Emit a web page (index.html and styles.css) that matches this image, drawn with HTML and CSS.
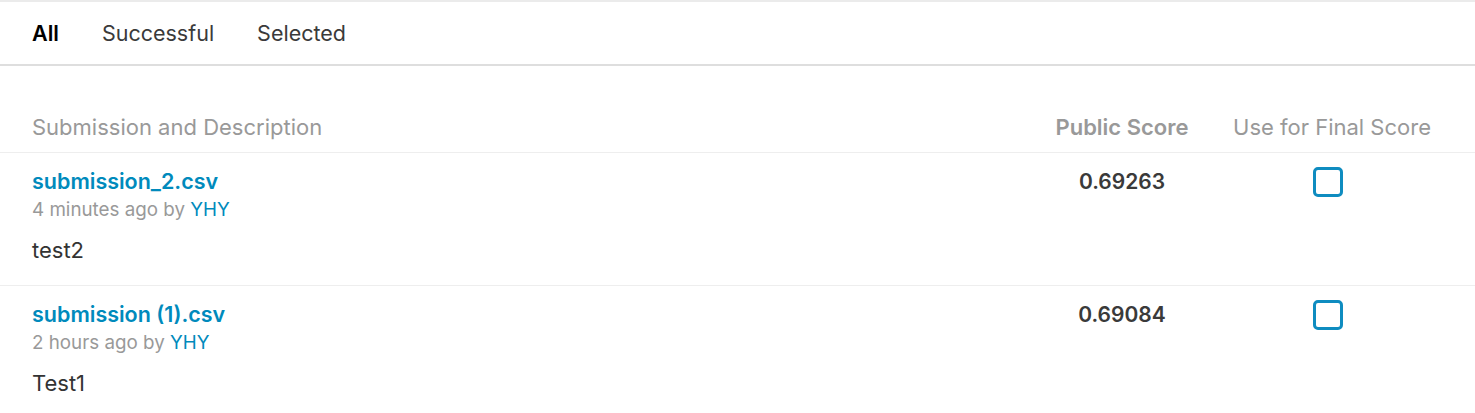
FILE: index.html
```html
<!DOCTYPE html>
<html>
<head>
<meta charset="utf-8">
<link rel="stylesheet" href="styles.css">
</head>
<body>
<div class="page">
  <nav class="tabs">
    <a class="tab active">All</a>
    <a class="tab">Successful</a>
    <a class="tab">Selected</a>
  </nav>
  <div class="table">
    <div class="row head">
      <div class="cell desc-col">Submission and Description</div>
      <div class="cell score-col bold">Public Score</div>
      <div class="cell use-col">Use for Final Score</div>
    </div>
    <div class="row item">
      <div class="cell desc-col">
        <a class="file">submission_2.csv</a>
        <div class="meta">4 minutes ago by <a class="user">YHY</a></div>
        <div class="desc">test2</div>
      </div>
      <div class="cell score-col score">0.69263</div>
      <div class="cell use-col"><span class="check"></span></div>
    </div>
    <div class="row item">
      <div class="cell desc-col">
        <a class="file">submission (1).csv</a>
        <div class="meta">2 hours ago by <a class="user">YHY</a></div>
        <div class="desc">Test1</div>
      </div>
      <div class="cell score-col score">0.69084</div>
      <div class="cell use-col"><span class="check"></span></div>
    </div>
  </div>
</div>
</body>
</html>
```
FILE: styles.css
```css
html, body {
  margin: 0;
  padding: 0;
  background: #fff;
}
body {
  font-family: Inter, "Liberation Sans", sans-serif;
  color: #333;
}
.page {
  border-top: 2px solid #ebebeb;
}
.tabs {
  display: flex;
  gap: 42px;
  padding: 0 32px;
  height: 62px;
  align-items: center;
  border-bottom: 2px solid #dedede;
}
.tab {
  font-size: 21.5px;
  color: #3a3a3a;
}
.tab.active {
  color: #000;
  font-weight: 600;
}
.tab + .tab {
  margin-left: 1px;
}
.table {
  padding-top: 47px;
}
.row {
  display: grid;
  grid-template-columns: 1fr 180px 240px;
  padding: 0 23px 0 32px;
  border-bottom: 1px solid #eee;
}
.head {
  height: 39px;
  align-items: start;
  color: #999;
  font-size: 22px;
}
.head .cell {
  line-height: 28px;
}
.bold {
  font-weight: 600;
}
.score-col, .use-col {
  text-align: center;
}
.item {
  height: 133px;
  padding-top: 14px;
  box-sizing: border-box;
}
.file {
  display: block;
  color: #008abc;
  font-weight: 600;
  font-size: 21.5px;
  line-height: 28px;
}
.meta {
  margin-top: 1px;
  color: #999;
  font-size: 18.8px;
  line-height: 28px;
}
.user {
  color: #008abc;
}
.desc {
  margin-top: 12px;
  font-size: 22px;
  line-height: 28px;
  color: #333;
}
.score {
  font-size: 21px;
  line-height: 30px;
  font-weight: 600;
  color: #3a3a3a;
}
.check {
  display: inline-block;
  width: 24px;
  height: 24px;
  border: 3px solid #0f8cc0;
  border-radius: 5px;
  margin-left: -8px;
}
```
